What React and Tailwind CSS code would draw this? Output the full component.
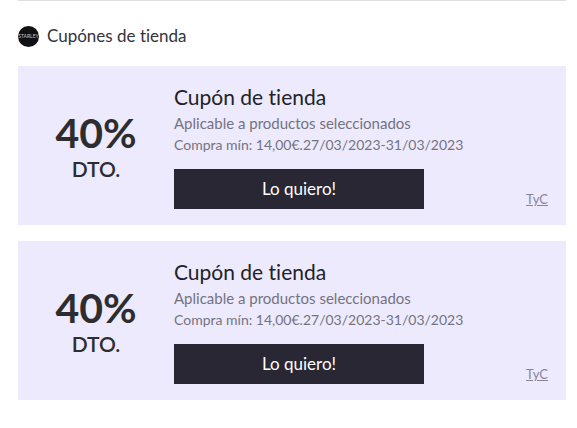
import React from 'react';

const coupons = [
  {
    id: 1,
    discount: '40%',
    title: 'Cupón de tienda',
    scope: 'Aplicable a productos seleccionados',
    terms: 'Compra mín: 14,00€.27/03/2023-31/03/2023'
  },
  {
    id: 2,
    discount: '40%',
    title: 'Cupón de tienda',
    scope: 'Aplicable a productos seleccionados',
    terms: 'Compra mín: 14,00€.27/03/2023-31/03/2023'
  }
];

const StoreLogo = () => (
  <svg viewBox="0 0 21 21" className="w-[21px] h-[21px] shrink-0" aria-label="Starley">
    <circle cx="10.5" cy="10.5" r="10.5" fill="#111113" />
    <text
      x="10.5"
      y="12"
      textAnchor="middle"
      fontFamily="Lato, sans-serif"
      fontSize="5"
      fill="#c4c4c6"
    >
      STARLEY
    </text>
  </svg>
);

const CouponCard = ({ coupon }) => (
  <article className="flex bg-[#edeafd] py-4">
    {/* Discount */}
    <div className="w-[156px] shrink-0 flex flex-col items-center justify-center pt-1.5 text-[#2d2d30]">
      <p className="text-[41px] leading-10 font-bold">{coupon.discount}</p>
      <p className="text-[21px] leading-8 font-semibold">DTO.</p>
    </div>

    {/* Details */}
    <div className="flex-1 min-w-0">
      <h3 className="text-[21px] leading-[30px] text-[#222228]">{coupon.title}</h3>
      <p className="text-[15px] leading-[22px] text-[#74737f]">{coupon.scope}</p>
      <p className="text-[14px] leading-[22px] text-[#74737f]">{coupon.terms}</p>
      <div className="flex items-end justify-between mt-[13px] pr-[18px]">
        <button
          type="button"
          className="w-[250px] h-10 bg-[#282733] text-white text-[17px] cursor-pointer"
        >
          Lo quiero!
        </button>
        <a href="#tyc" className="text-[13px] leading-5 text-[#85849a] underline">
          TyC
        </a>
      </div>
    </div>
  </article>
);

const App = () => {
  return (
    <main className="pl-[18px] pr-[11px] pb-6 bg-white font-['Lato',sans-serif] [font-variant-ligatures:none]">
      <hr className="border-[#dedede]" />
      <header className="flex items-center gap-2 pt-5 pb-[15px]">
        <StoreLogo />
        <h2 className="text-[17px] leading-[30px] text-[#33333b]">Cupónes de tienda</h2>
      </header>
      <section className="flex flex-col gap-4">
        {coupons.map(coupon => (
          <CouponCard key={coupon.id} coupon={coupon} />
        ))}
      </section>
    </main>
  );
};

export default App;
